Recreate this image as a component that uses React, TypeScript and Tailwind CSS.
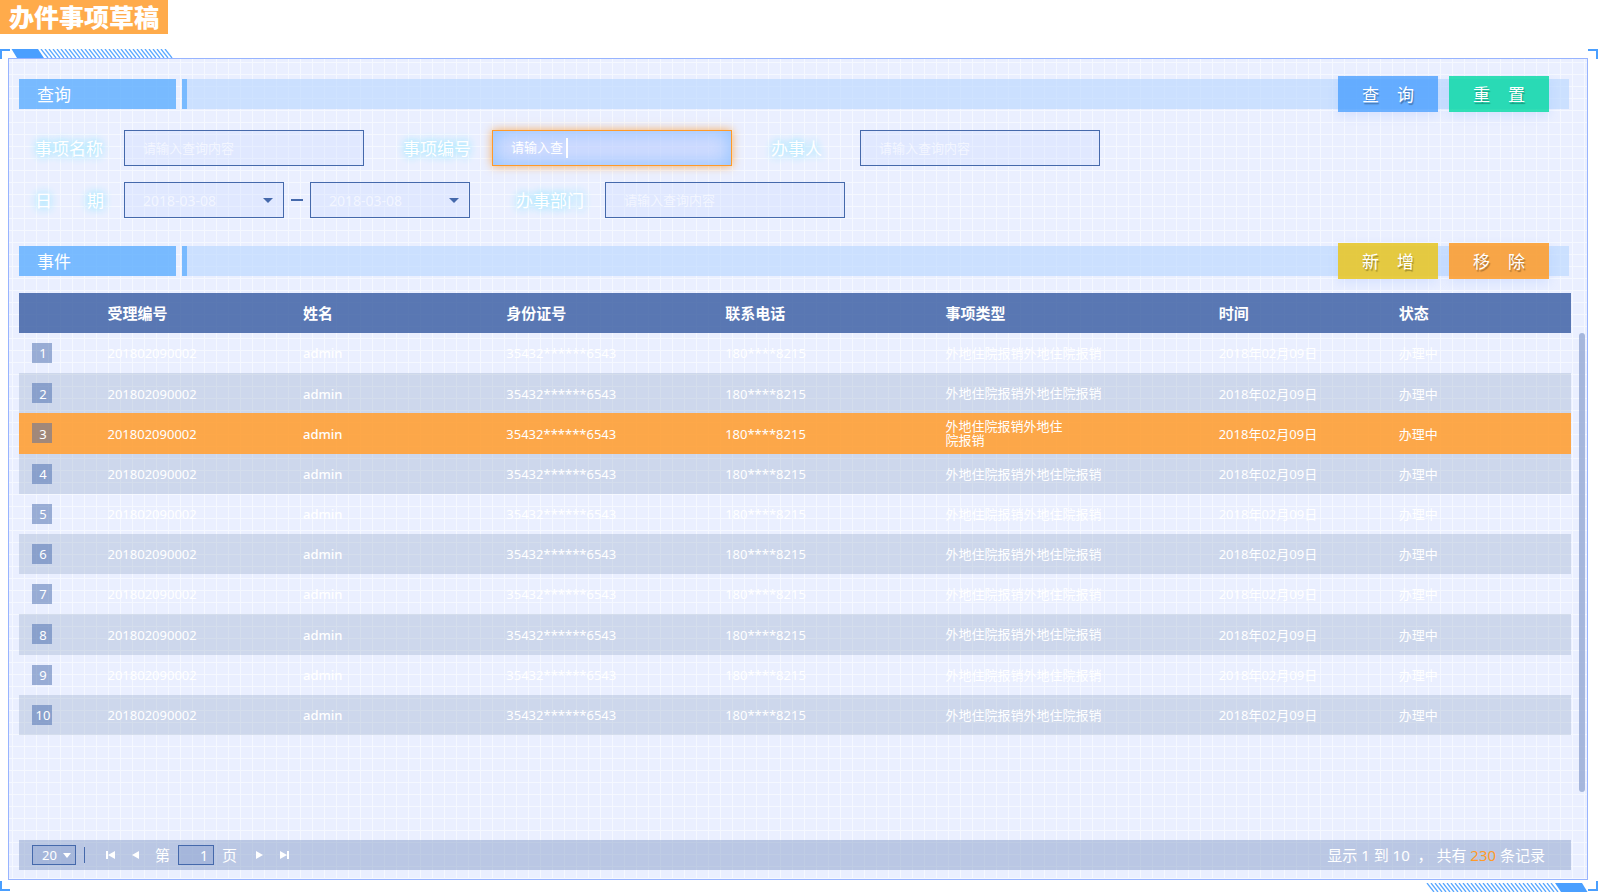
import { useState, type ReactNode } from "react";

const ROWS = Array.from({ length: 10 }, (_, i) => i + 1);
const SELECTED = 3;

const LABEL =
  "pt-0.5 text-[17px] leading-6 text-white [text-shadow:0_0_8px_#8fe4ff,0_0_8px_#b0ecff]";
const FIELD =
  "h-9 border border-[#4569ab] bg-[#d3dfff]/40 px-[18px] text-[13px] text-white outline-none placeholder:text-white/60 placeholder:opacity-100";

function Section({ title, children }: { title: string; children: ReactNode }) {
  return (
    <div className="flex h-9 items-center pr-2">
      <h2 className="flex h-[30px] w-[157px] items-center bg-[#5badff]/80 pt-0.5 pl-[18px] text-[17px] text-white">
        {title}
      </h2>
      <span className="ml-1.5 h-[30px] w-[5px] bg-[#5badff]/80" />
      <div className="flex h-[30px] flex-1 items-center justify-end gap-[11px] bg-[#b5d6ff]/60 pr-5">
        {children}
      </div>
    </div>
  );
}

function ActionButton({ text, color }: { text: string; color: string }) {
  return (
    <button
      type="button"
      className={`flex h-9 w-[100px] shrink-0 items-center justify-between px-6 pt-0.5 text-[17px] text-white shadow-[0_4px_10px_rgba(110,160,255,0.16)] [text-shadow:1px_2px_1px_rgba(0,0,0,0.3)] ${color}`}
    >
      {text.split("").map((c) => (
        <span key={c}>{c}</span>
      ))}
    </button>
  );
}

function DateSelect({ id, label }: { id: string; label: string }) {
  return (
    <div className="grid items-center">
      <select
        id={id}
        aria-label={label}
        className="col-start-1 row-start-1 h-9 w-40 appearance-none border border-[#4569ab] bg-[#d3dfff]/40 pl-[18px] text-[14px] text-white/60 outline-none"
      >
        <option>2018-03-08</option>
      </select>
      <svg
        className="pointer-events-none col-start-1 row-start-1 mr-[11px] justify-self-end"
        width="10"
        height="5"
        viewBox="0 0 10 5"
      >
        <path d="M0 0h10L5 5z" fill="#4569ab" />
      </svg>
    </div>
  );
}

function Hatch({ className }: { className: string }) {
  const lines = Array.from({ length: 32 }, (_, i) => 30 + i * 4);
  return (
    <svg className={className} width="163" height="9" viewBox="0 0 163 9">
      <path d="M0.5 0H27l6 9H6z" fill="#4a9fff" />
      {lines.map((x) => (
        <path key={x} d={`M${x} 0l7 9`} stroke="#5aa8ff" strokeWidth="1.3" />
      ))}
    </svg>
  );
}

function PageIcon({ label, d, width }: { label: string; d: string; width: number }) {
  return (
    <button type="button" aria-label={label} className="flex h-5 items-center">
      <svg width={width} height="8" viewBox={`0 0 ${width} 8`}>
        <path d={d} fill="#fff" />
      </svg>
    </button>
  );
}

export default function App() {
  const [code, setCode] = useState("请输入查");
  const [page, setPage] = useState("1");

  return (
    <div className="flex min-h-screen flex-col overflow-x-hidden bg-white font-['Noto_Sans','Noto_Sans_CJK_SC',sans-serif]">
      <header className="flex h-[49px] items-start">
        <h1 className="bg-[#ffab4b] px-[9px] text-[25px] leading-[34px] font-black text-white">
          办件事项草稿
        </h1>
      </header>

      <div className="relative flex flex-1 flex-col py-[9px] pr-[11px] pb-3 pl-2">
        <span className="absolute top-0 left-0 size-2.5 border-t-2 border-l-2 border-[#4a9fff]" />
        <span className="absolute top-0 right-px size-2.5 border-t-2 border-r-2 border-[#4a9fff]" />
        <span className="absolute bottom-px left-0 size-2.5 border-b-2 border-l-2 border-[#4a9fff]" />
        <span className="absolute right-px bottom-px size-2.5 border-r-2 border-b-2 border-[#4a9fff]" />
        <Hatch className="absolute top-0 left-[11px]" />
        <Hatch className="absolute right-[11px] bottom-0 rotate-180" />

        <main className="flex flex-1 flex-col border border-[#98b4ff] bg-[#eaefff] bg-[linear-gradient(to_right,#f5f8ff_1px,transparent_1px),linear-gradient(to_bottom,#f5f8ff_1px,transparent_1px)] bg-[size:12px_12px] bg-[position:3px_3px] pt-[17px] pr-0.5 pb-[9px] pl-2.5">
          <div className="pr-2">
            <Section title="查询">
              <ActionButton text="查询" color="bg-[#4a9fff]/80" />
              <ActionButton text="重置" color="bg-[#00d8a2]/80" />
            </Section>
          </div>

          <form className="mt-[18px] flex flex-col gap-4 pl-4">
            <div className="flex items-center">
              <label htmlFor="name" className={`w-[89px] ${LABEL}`}>
                事项名称
              </label>
              <input id="name" placeholder="请输入查询内容" className={`w-60 ${FIELD}`} />
              <label htmlFor="code" className={`ml-[39px] w-[89px] ${LABEL}`}>
                事项编号
              </label>
              <div className="flex h-9 w-60 items-center border border-[#ff9a29] bg-[#bfcfff]/60 px-[18px] shadow-[0_0_9px_rgba(255,154,41,0.75),inset_0_0_20px_rgba(120,185,255,0.75)]">
                <input
                  id="code"
                  value={code}
                  onChange={(e) => setCode(e.target.value)}
                  className="w-[55px] bg-transparent text-[13px] text-white outline-none"
                />
                <span className="h-5 w-0.5 bg-white" />
              </div>
              <label htmlFor="agent" className={`ml-[39px] w-[89px] ${LABEL}`}>
                办事人
              </label>
              <input id="agent" placeholder="请输入查询内容" className={`w-60 ${FIELD}`} />
            </div>
            <div className="flex items-center">
              <label htmlFor="from" className={`flex w-[89px] justify-between pr-5 ${LABEL}`}>
                <span>日</span>
                <span>期</span>
              </label>
              <DateSelect id="from" label="开始日期" />
              <span className="mx-[7px] h-0.5 w-3 bg-[#4569ab]" />
              <DateSelect id="to" label="结束日期" />
              <label htmlFor="dept" className={`ml-[46px] w-[89px] ${LABEL}`}>
                办事部门
              </label>
              <input id="dept" placeholder="请输入查询内容" className={`w-60 ${FIELD}`} />
            </div>
          </form>

          <div className="mt-[25px] pr-2">
            <Section title="事件">
              <ActionButton text="新增" color="bg-[#e7c62c]/90" />
              <ActionButton text="移除" color="bg-[#fc9e33]/90" />
            </Section>
          </div>

          <div className="mt-3.5 flex flex-1 justify-between gap-2">
            <div className="flex-1">
              <table className="h-[442px] w-full table-fixed border-collapse text-left text-[13px] text-white">
                <colgroup>
                  <col className="w-[5.7%]" />
                  <col className="w-[12.6%]" />
                  <col className="w-[13.1%]" />
                  <col className="w-[14.1%]" />
                  <col className="w-[14.2%]" />
                  <col className="w-[17.6%]" />
                  <col className="w-[11.6%]" />
                  <col className="w-[11.1%]" />
                </colgroup>
                <thead>
                  <tr className="h-10 bg-[#3559a0]/80 text-[15px]">
                    <th aria-label="序号" />
                    {["受理编号", "姓名", "身份证号", "联系电话", "事项类型", "时间", "状态"].map((h) => (
                      <th key={h} className="p-0 font-bold">
                        {h}
                      </th>
                    ))}
                  </tr>
                </thead>
                <tbody>
                  {ROWS.map((n) => (
                    <tr
                      key={n}
                      className={`h-10 ${
                        n === SELECTED ? "bg-[#ff9a29]/85" : n % 2 === 0 ? "bg-[#99acc9]/35" : ""
                      }`}
                    >
                      <td className="p-0 pl-[13px]">
                        <span className="flex size-5 items-center justify-center bg-[#4569ab]/50 pt-0.5 pl-0.5">
                          {n}
                        </span>
                      </td>
                      <td className="p-0 pt-0.5">201802090002</td>
                      <td className="p-0 pt-0.5 font-medium">admin</td>
                      <td className="p-0 pt-0.5">35432******6543</td>
                      <td className="p-0 pt-0.5">180****8215</td>
                      <td className="p-0">
                        <div className={n === SELECTED ? "w-[120px] leading-[14px]" : "leading-[14px]"}>
                          外地住院报销外地住院报销
                        </div>
                      </td>
                      <td className="p-0 pt-0.5">2018年02月09日</td>
                      <td className="p-0 pt-0.5">办理中</td>
                    </tr>
                  ))}
                </tbody>
              </table>
            </div>
            <div className="mt-10 h-[459px] w-1.5 rounded-full bg-[#8ea3d0]/75" />
          </div>

          <footer className="mr-3.5 flex h-[30px] items-center bg-[#8a9fca]/50 pr-[26px] pl-[13px] text-[15px] text-white">
            <div className="grid items-center">
              <select
                aria-label="每页条数"
                className="col-start-1 row-start-1 h-5 w-11 appearance-none border border-[#4569ab] bg-[#8fa5d2]/50 pl-[9px] text-[13px] leading-4 outline-none"
              >
                <option>20</option>
              </select>
              <svg
                className="pointer-events-none col-start-1 row-start-1 mr-[5px] justify-self-end"
                width="8"
                height="5"
                viewBox="0 0 8 5"
              >
                <path d="M0 0h8L4 5z" fill="#fff" />
              </svg>
            </div>
            <span className="mr-[21px] ml-2 h-4 w-px bg-[#4569ab]" />
            <PageIcon label="首页" width={9} d="M0 0h2v8H0zM9 0v8L2 4z" />
            <span className="w-[17px]" />
            <PageIcon label="上一页" width={7} d="M7 0v8L0 4z" />
            <label htmlFor="page" className="ml-4">
              第
            </label>
            <input
              id="page"
              value={page}
              onChange={(e) => setPage(e.target.value)}
              className="mx-2 h-5 w-9 border border-[#4569ab] bg-[#8fa5d2]/50 pr-[5px] text-right text-[14px] outline-none"
            />
            <span>页</span>
            <span className="w-[19px]" />
            <PageIcon label="下一页" width={7} d="M0 0v8l7-4z" />
            <span className="w-[17px]" />
            <PageIcon label="末页" width={9} d="M0 0v8l7-4zM7 0h2v8H7z" />
            <p className="ml-auto whitespace-pre">
              显示 1 到 10{"  "}， 共有 <span className="text-[#ff9a29]">230</span> 条记录
            </p>
          </footer>
        </main>
      </div>
    </div>
  );
}
